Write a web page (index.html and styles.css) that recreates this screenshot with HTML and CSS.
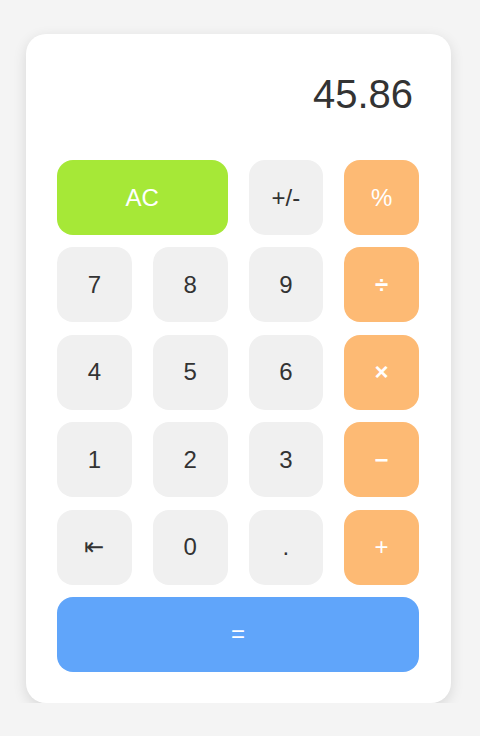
FILE: index.html
```html
<!DOCTYPE html>
<html lang="en">
<head>
<meta charset="utf-8">
<title>Calculator</title>
<link rel="stylesheet" href="styles.css">
</head>
<body>
<div class="calculator">
  <div class="display">45.86</div>
  <div class="keys">
    <button class="key key-clear">AC</button>
    <button class="key">+/-</button>
    <button class="key key-op">%</button>
    <button class="key">7</button>
    <button class="key">8</button>
    <button class="key">9</button>
    <button class="key key-op key-sym">÷</button>
    <button class="key">4</button>
    <button class="key">5</button>
    <button class="key">6</button>
    <button class="key key-op key-sym">×</button>
    <button class="key">1</button>
    <button class="key">2</button>
    <button class="key">3</button>
    <button class="key key-op key-sym">−</button>
    <button class="key key-back">⇤</button>
    <button class="key">0</button>
    <button class="key">.</button>
    <button class="key key-op">+</button>
    <button class="key key-equals">=</button>
  </div>
</div>
</body>
</html>
```
FILE: styles.css
```css
html, body {
  margin: 0;
  padding: 0;
}
body {
  background: #f4f4f4;
  font-family: "Liberation Sans", Arial, sans-serif;
  padding-top: 34px;
  padding-left: 26px;
}
.calculator {
  width: 425px;
  height: 669px;
  box-sizing: border-box;
  background: #ffffff;
  border-radius: 20px;
  box-shadow: 0 4px 14px rgba(0, 0, 0, 0.12);
  padding: 38px 32px 31px 31px;
  display: flex;
  flex-direction: column;
}
.display {
  font-size: 40px;
  color: #333333;
  text-align: right;
  padding-right: 6px;
  line-height: 45px;
  height: 45px;
  margin-bottom: 43px;
}
.keys {
  display: grid;
  grid-template-columns: repeat(4, 1fr);
  grid-auto-rows: 75px;
  column-gap: 21px;
  row-gap: 12.4px;
}
.key {
  border: none;
  border-radius: 16px;
  background: #f0f0f0;
  color: #333333;
  font-family: "Liberation Sans", Arial, sans-serif;
  font-size: 24px;
  display: flex;
  align-items: center;
  justify-content: center;
  padding: 0;
  margin: 0;
}
.key-clear {
  grid-column: span 2;
  background: #a6e837;
  color: #ffffff;
}
.key-op {
  background: #fdba74;
  color: #ffffff;
}
.key-sym {
  font-weight: bold;
}
.key-back {
  font-family: "DejaVu Sans", sans-serif;
  font-size: 24px;
}
.key-equals {
  grid-column: span 4;
  background: #60a5fa;
  color: #ffffff;
}
```
